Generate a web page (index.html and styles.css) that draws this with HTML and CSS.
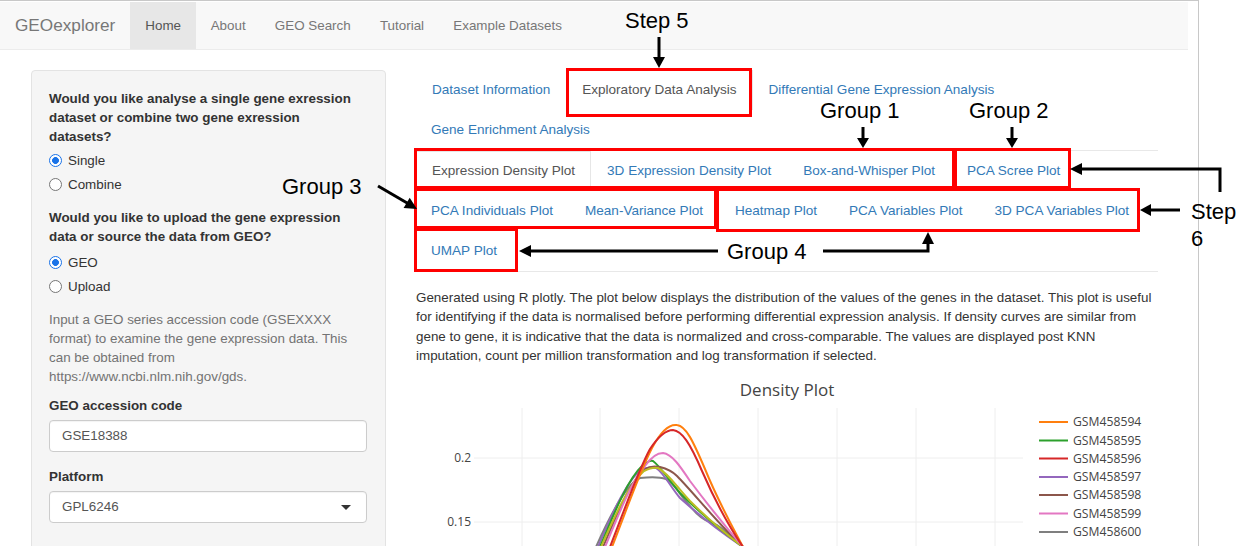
FILE: index.html
```html
<!DOCTYPE html>
<html lang="en">
<head>
<meta charset="utf-8">
<title>GEOexplorer</title>
<link rel="stylesheet" href="styles.css">
</head>
<body>
<div class="frame">
  <nav class="navbar">
    <a class="brand">GEOexplorer</a>
    <ul class="nav">
      <li class="active"><a>Home</a></li>
      <li><a>About</a></li>
      <li><a>GEO Search</a></li>
      <li><a>Tutorial</a></li>
      <li><a>Example Datasets</a></li>
    </ul>
  </nav>
  <div class="row">
    <aside class="well">
      <p class="q">Would you like analyse a single gene exression dataset or combine two gene exression datasets?</p>
      <label class="radio first"><input type="radio" name="mode" checked><span>Single</span></label>
      <label class="radio"><input type="radio" name="mode"><span>Combine</span></label>
      <p class="q q2">Would you like to upload the gene expression data or source the data from GEO?</p>
      <label class="radio first2"><input type="radio" name="src" checked><span>GEO</span></label>
      <label class="radio"><input type="radio" name="src"><span>Upload</span></label>
      <p class="help">Input a GEO series accession code (GSEXXXX format) to examine the gene expression data. This can be obtained from https://www.ncbi.nlm.nih.gov/gds.</p>
      <div class="label first-label">GEO accession code</div>
      <div class="input">GSE18388</div>
      <div class="label">Platform</div>
      <div class="input select">GPL6246<span class="caret"></span></div>
    </aside>
    <main class="main">
      <ul class="tabs">
        <li><a>Dataset Information</a></li>
        <li class="active"><a>Exploratory Data Analysis</a></li>
        <li><a>Differential Gene Expression Analysis</a></li>
        <li><a>Gene Enrichment Analysis</a></li>
      </ul>
      <ul class="tabs">
        <li class="active"><a>Expression Density Plot</a></li>
        <li><a>3D Expression Density Plot</a></li>
        <li><a>Box-and-Whisper Plot</a></li>
        <li><a>PCA Scree Plot</a></li>
        <li><a>PCA Individuals Plot</a></li>
        <li><a>Mean-Variance Plot</a></li>
        <li><a>Heatmap Plot</a></li>
        <li><a>PCA Variables Plot</a></li>
        <li><a>3D PCA Variables Plot</a></li>
        <li><a>UMAP Plot</a></li>
      </ul>
      <p class="desc">Generated using R plotly. The plot below displays the distribution of the values of the genes in the dataset. This plot is useful for identifying if the data is normalised before performing differential expression analysis. If density curves are similar from gene to gene, it is indicative that the data is normalized and cross-comparable. The values are displayed post KNN imputation, count per million transformation and log transformation if selected.</p>
      <div class="plot">
        <svg width="742" height="181" viewBox="416 365 742 181">
          <text class="ptitle" x="787" y="395" text-anchor="middle">Density Plot</text>
          <g class="grid">
            <line x1="522" y1="407" x2="522" y2="560"/>
            <line x1="600" y1="407" x2="600" y2="560"/>
            <line x1="679" y1="407" x2="679" y2="560"/>
            <line x1="758" y1="407" x2="758" y2="560"/>
            <line x1="837" y1="407" x2="837" y2="560"/>
            <line x1="916" y1="407" x2="916" y2="560"/>
            <line x1="995" y1="407" x2="995" y2="560"/>
            <line x1="474" y1="457" x2="1023" y2="457"/>
            <line x1="474" y1="521" x2="1023" y2="521"/>
          </g>
          <text class="tick" x="471" y="461" text-anchor="end">0.2</text>
          <text class="tick" x="471" y="525" text-anchor="end">0.15</text>
          <g class="curves" fill="none" stroke-width="2">
            <path stroke="#7f7f7f" d="M596,546 C612,510 628,482 640,477 C650,476 660,476 666,478 C675,482 680,495 690,505 C698,515 703,519 710,521 C722,525 730,535 743,546"/>
            <path stroke="#9467bd" d="M598,546 C613,510 628,478 642,468 C648,466 652,466 656,467 C664,472 670,485 680,497 C700,515 722,532 743,546"/>
            <path stroke="#2ca02c" d="M600,546 C615,510 628,478 642,465 C648,460 651,459 653,460 C660,465 668,478 680,492 C700,512 722,530 743,546"/>
            <path stroke="#8c564b" d="M603,546 C618,512 630,480 645,468 C650,465 654,465 660,466 C668,468 672,470 677,475 C692,490 720,525 743,546"/>
            <path stroke="#bcbd22" d="M601,546 C616,512 630,482 644,470 C650,467 654,466 658,467 C668,472 676,485 690,500 C708,518 726,533 743,546"/>
            <path stroke="#e377c2" d="M605,546 C620,510 632,480 645,465 C652,455 658,452 663,452 C672,453 680,465 690,480 C705,500 725,525 743,546"/>
            <path stroke="#ff7f0e" d="M612,546 C628,505 640,470 652,447 C662,428 670,423 677,424 C686,425 693,440 705,468 C718,500 732,525 743,546"/>
            <path stroke="#d62728" d="M610,546 C626,505 638,470 650,448 C660,433 668,429 673,429 C682,430 690,442 702,470 C716,502 730,527 743,546"/>
          </g>
          <g class="legend">
            <line x1="1039" y1="421" x2="1068" y2="421" stroke="#ff7f0e"/><text x="1073" y="425">GSM458594</text>
            <line x1="1039" y1="439.5" x2="1068" y2="439.5" stroke="#2ca02c"/><text x="1073" y="443.5">GSM458595</text>
            <line x1="1039" y1="457.5" x2="1068" y2="457.5" stroke="#d62728"/><text x="1073" y="461.5">GSM458596</text>
            <line x1="1039" y1="476" x2="1068" y2="476" stroke="#9467bd"/><text x="1073" y="480">GSM458597</text>
            <line x1="1039" y1="494" x2="1068" y2="494" stroke="#8c564b"/><text x="1073" y="498">GSM458598</text>
            <line x1="1039" y1="512.5" x2="1068" y2="512.5" stroke="#e377c2"/><text x="1073" y="516.5">GSM458599</text>
            <line x1="1039" y1="531" x2="1068" y2="531" stroke="#7f7f7f"/><text x="1073" y="535">GSM458600</text>
          </g>
        </svg>
      </div>
    </main>
  </div>
</div>

<div class="annot">
  <svg class="marks" width="1259" height="546" viewBox="0 0 1259 546">
    <g fill="none" stroke="#ff0000" stroke-width="3">
      <rect x="567.5" y="69.5" width="183" height="46"/>
      <rect x="415.5" y="149.5" width="538" height="38"/>
      <rect x="955.5" y="149.5" width="114" height="38"/>
      <rect x="415.5" y="189.5" width="300" height="38"/>
      <rect x="717.5" y="189.5" width="421" height="41"/>
      <rect x="415.5" y="229.5" width="101" height="41"/>
    </g>
    <g fill="none" stroke="#000" stroke-width="3">
      <line x1="659" y1="37" x2="659" y2="58"/>
      <line x1="863" y1="127" x2="863" y2="139"/>
      <line x1="1012" y1="127" x2="1012" y2="139"/>
      <polyline points="1220,192 1220,169 1080,169"/>
      <line x1="1180" y1="210" x2="1150" y2="210"/>
      <line x1="718" y1="251" x2="529" y2="251"/>
      <polyline points="823,251 928,251 928,242"/>
      <line x1="378" y1="186" x2="408" y2="203.5"/>
    </g>
    <g fill="#000">
      <polygon points="653,57 665,57 659,68"/>
      <polygon points="857,138 869,138 863,148"/>
      <polygon points="1006,138 1018,138 1012,148"/>
      <polygon points="1082,163 1082,175 1070,169"/>
      <polygon points="1151,204 1151,216 1140,210"/>
      <polygon points="531,245 531,257 519,251"/>
      <polygon points="922,244 934,244 928,232"/>
      <polygon points="403.6,208.1 409.7,197.7 417,209"/>
    </g>
  </svg>
  <span class="note n-step5">Step 5</span>
  <span class="note n-g1">Group 1</span>
  <span class="note n-g2">Group 2</span>
  <span class="note n-g3">Group 3</span>
  <span class="note n-g4">Group 4</span>
  <span class="note n-step6">Step 6</span>
</div>
</body>
</html>
```

FILE: styles.css
```css
html, body {
  margin: 0;
  padding: 0;
  background: #fff;
}
body {
  width: 1259px;
  height: 546px;
  overflow: hidden;
  position: relative;
  font-family: "Liberation Sans", Arial, sans-serif;
  font-size: 13.4px;
  color: #333;
}
ul { list-style: none; margin: 0; padding: 0; }
p { margin: 0; }

.frame {
  width: 1198px;
  height: 545px;
  border-top: 1px solid #c8c8c8;
  border-right: 1px solid #c8c8c8;
}

/* navbar */
.navbar {
  margin-top: 1px;
  width: 1188px;
  height: 47px;
  background: #f8f8f8;
  border-bottom: 1px solid #ececec;
  display: flex;
  align-items: stretch;
}
.brand {
  padding: 0 15px;
  font-size: 17.2px;
  line-height: 47px;
  color: #777;
}
.nav { display: flex; }
.nav a {
  display: block;
  padding: 0 14.6px;
  line-height: 47px;
  color: #777;
}
.nav li:first-child a { padding: 0 15px; }
.nav .active a {
  background: #e7e7e7;
  color: #555;
}

/* layout */
.row {
  display: flex;
  align-items: flex-start;
  gap: 30px;
  padding: 18px 0 0 31px;
}

/* sidebar */
.well {
  box-sizing: border-box;
  width: 355px;
  height: 520px;
  margin-top: 2px;
  padding: 18px 17px;
  background: #f5f5f5;
  border: 1px solid #e3e3e3;
  border-radius: 4px;
  display: flex;
  flex-direction: column;
}
.q {
  max-width: 310px;
  font-weight: bold;
  line-height: 19px;
}
.q2 { margin-top: 12px; }
.radio {
  display: flex;
  align-items: center;
  gap: 6px;
  height: 24px;
}
.radio.first { margin-top: 2px; }
.radio.first2 { margin-top: 4px; }
.radio input {
  appearance: none;
  -webkit-appearance: none;
  margin: 0;
  width: 13px;
  height: 13px;
  border-radius: 50%;
  border: 1px solid #767676;
  background: #fff;
  box-sizing: border-box;
}
.radio input:checked {
  border: 1.5px solid #1a73e8;
  background: radial-gradient(circle, #1a73e8 0 3.1px, #fff 3.7px);
}
.help {
  margin-top: 12px;
  line-height: 19px;
  color: #737373;
}
.label {
  margin-top: 15px;
  font-weight: bold;
  line-height: 19px;
}
.label.first-label { margin-top: 10px; }
.input {
  margin-top: 5px;
  box-sizing: border-box;
  width: 318px;
  height: 32px;
  padding: 0 12px;
  line-height: 30px;
  color: #555;
  background: #fff;
  border: 1px solid #ccc;
  border-radius: 4px;
  box-shadow: inset 0 1px 1px rgba(0,0,0,.05);
}
.select { display: flex; align-items: center; justify-content: space-between; }
.caret {
  width: 0;
  height: 0;
  margin-right: 3px;
  border-top: 5px solid #333;
  border-left: 5px solid transparent;
  border-right: 5px solid transparent;
}

/* main */
.main {
  width: 742px;
  flex: none;
  margin-top: 2px;
}
.tabs {
  display: flex;
  flex-wrap: wrap;
  border-bottom: 1px solid #e8e8e8;
}
.tabs li { margin-right: 2px; }
.tabs a {
  display: block;
  padding: 9px 15px 10px;
  line-height: 20px;
  font-size: 13.55px;
  color: #337ab7;
  border: 1px solid transparent;
  border-bottom: 0;
  margin-left: -1px;
  margin-right: -1px;
}
.tabs li:first-child a { margin-left: 0; }
.tabs .active a {
  color: #555;
  border-color: #e6e6e6;
}
.desc {
  margin-top: 16px;
  width: 742px;
  font-size: 13.4px;
  line-height: 19.4px;
  color: #333;
}
.plot svg { display: block; }
.ptitle {
  font-family: "Open Sans", "Liberation Sans", sans-serif;
  font-size: 17px;
  fill: #444;
}
.grid line { stroke: #eee; stroke-width: 1; }
.tick {
  font-family: "Open Sans", "Liberation Sans", sans-serif;
  font-size: 12px;
  fill: #444;
}
.legend line { stroke-width: 2; }
.legend text {
  font-family: "Open Sans", "Liberation Sans", sans-serif;
  font-size: 12.2px;
  fill: #444;
}

/* annotation layer */
.annot {
  position: absolute;
  top: 0;
  left: 0;
  width: 1259px;
  height: 546px;
  pointer-events: none;
}
.marks { position: absolute; top: 0; left: 0; }
.note {
  position: absolute;
  font-family: "Liberation Sans", Arial, sans-serif;
  font-size: 22px;
  line-height: 26px;
  color: #000;
  white-space: nowrap;
}
.n-step5 { left: 625px; top: 8px; }
.n-g1 { left: 820px; top: 98px; }
.n-g2 { left: 969px; top: 98px; }
.n-g3 { left: 282px; top: 174px; }
.n-g4 { left: 727px; top: 239px; }
.n-step6 {
  left: 1191px;
  top: 198px;
  width: 60px;
  white-space: normal;
  line-height: 27px;
}
```
